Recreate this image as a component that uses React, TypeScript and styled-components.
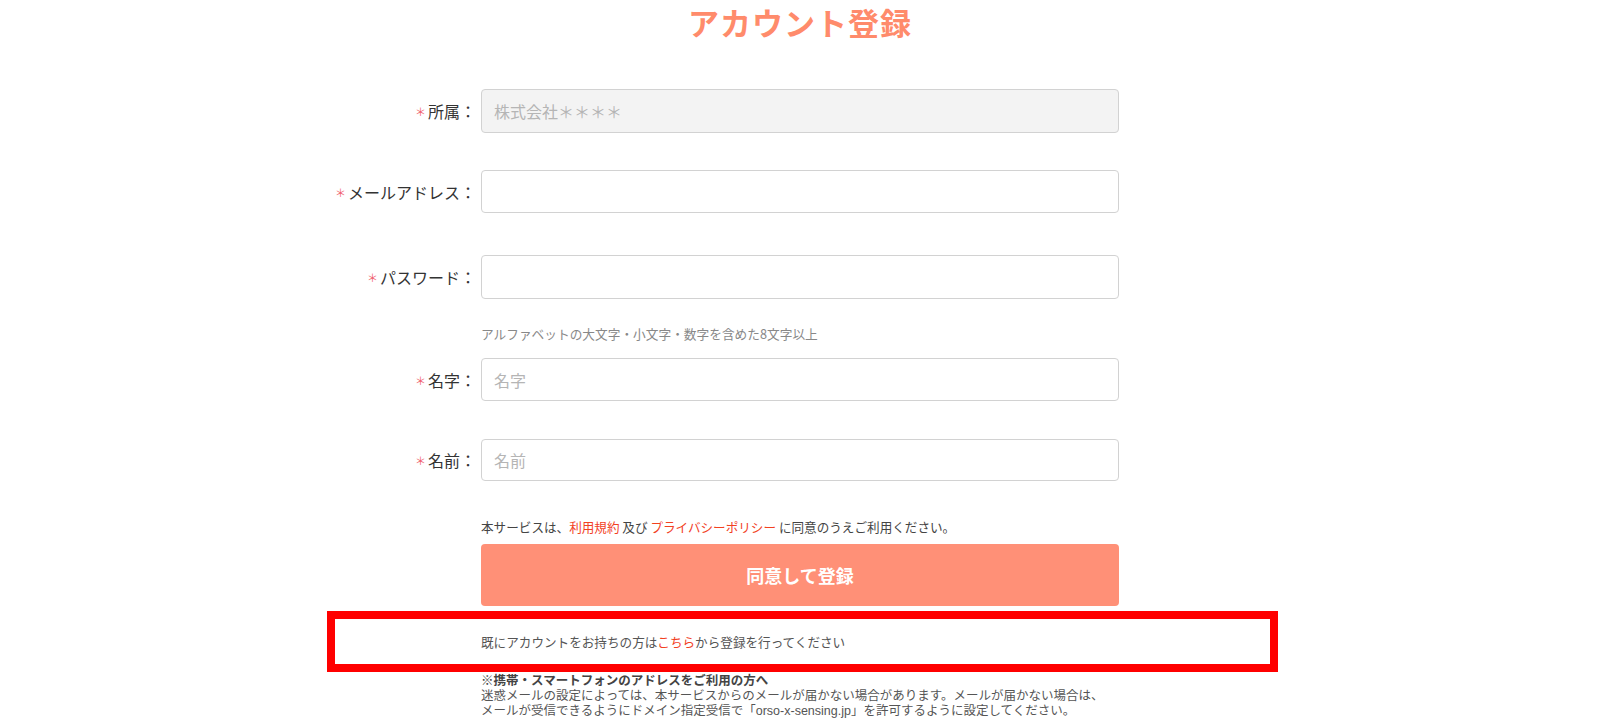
import React from "react";
import styled, { createGlobalStyle } from "styled-components";

const Global = createGlobalStyle`
  html, body { margin: 0; padding: 0; background: #fff; }
  body {
    font-family: "Noto Sans CJK JP", "Noto Sans", "Liberation Sans", sans-serif;
    color: #333;
  }
  * { box-sizing: border-box; }
`;

const Page = styled.div`
  width: 952px;
  margin: 0 auto;
  display: flex;
  flex-direction: column;
`;

const Title = styled.h1`
  margin: 0;
  height: 44px;
  line-height: 44px;
  text-align: center;
  font-size: 31px;
  font-weight: 700;
  letter-spacing: 1px;
  color: #ff8b6b;
`;

const Row = styled.div<{ $top: number }>`
  display: grid;
  grid-template-columns: 152px 638px;
  column-gap: 5px;
  align-items: center;
  margin-top: ${(p) => p.$top}px;
`;

const Label = styled.label`
  text-align: right;
  font-size: 16px;
  line-height: 20px;
  color: #333;
  white-space: nowrap;
`;

const Req = styled.span`
  color: #f0606e;
  font-size: 11px;
  margin-right: 2px;
  vertical-align: 2px;
`;

const Input = styled.input<{ $h?: number }>`
  height: ${(p) => p.$h ?? 44}px;
  width: 100%;
  border: 1px solid #d2d2d2;
  border-radius: 4px;
  padding: 0 12px;
  font-family: inherit;
  font-size: 16px;
  color: #333;
  background: #fff;
  outline: none;
  &::placeholder { color: #b5b5b5; }
  &:disabled {
    background: #f3f3f3;
    color: #b5b5b5;
  }
`;

const Indented = styled.div<{ $top: number }>`
  margin-left: 157px;
  width: 638px;
  margin-top: ${(p) => p.$top}px;
`;

const Hint = styled.p`
  margin: 0;
  font-size: 12.7px;
  line-height: 16px;
  color: #888;
`;

const Terms = styled.p`
  margin: 0;
  font-size: 12.6px;
  line-height: 16px;
  color: #444;
`;

const Link = styled.a`
  color: #f2411f;
  text-decoration: none;
`;

const Submit = styled.button`
  display: block;
  width: 100%;
  height: 62px;
  border: none;
  border-radius: 4px;
  background: #ff9077;
  color: #fff;
  font-family: inherit;
  font-size: 18px;
  font-weight: 700;
  cursor: pointer;
`;

const Highlight = styled.div`
  margin: 5px 0 0 3px;
  width: 951px;
  height: 61px;
  border: 8px solid #ff0000;
  padding-left: 146px;
  display: flex;
  align-items: center;
`;

const LoginNote = styled.p`
  margin: 0;
  font-size: 12.6px;
  color: #555;
`;

const NoteHead = styled.p`
  margin: 0;
  font-size: 12.5px;
  line-height: 16px;
  font-weight: 700;
  color: #444;
`;

const NoteBody = styled.p`
  margin: 1px 0 0;
  font-family: "Liberation Sans", "Noto Sans CJK JP", sans-serif;
  font-size: 12.5px;
  line-height: 15px;
  color: #555;
`;

type FieldProps = {
  label: string;
  top: number;
  placeholder?: string;
  value?: string;
  type?: string;
  disabled?: boolean;
  h?: number;
};

const Field = ({ label, top, placeholder, value, type, disabled, h }: FieldProps) => (
  <Row $top={top}>
    <Label>
      <Req>＊</Req>
      {label}：
    </Label>
    <Input
      type={type ?? "text"}
      placeholder={placeholder}
      defaultValue={value}
      disabled={disabled}
      $h={h}
    />
  </Row>
);

export default function App() {
  return (
    <>
      <Global />
      <Page>
        <Title>アカウント登録</Title>
        <Field label="所属" top={45} value="株式会社＊＊＊＊" disabled />
        <Field label="メールアドレス" top={37} h={43} />
        <Field label="パスワード" top={42} type="password" />
        <Indented $top={27}>
          <Hint>アルファベットの大文字・小文字・数字を含めた8文字以上</Hint>
        </Indented>
        <Field label="名字" top={16} placeholder="名字" h={43} />
        <Field label="名前" top={38} placeholder="名前" h={42} />
        <Indented $top={38}>
          <Terms>
            本サービスは、<Link href="#">利用規約</Link> 及び{" "}
            <Link href="#">プライバシーポリシー</Link> に同意のうえご利用ください。
          </Terms>
        </Indented>
        <Indented $top={9}>
          <Submit type="button">同意して登録</Submit>
        </Indented>
        <Highlight>
          <LoginNote>
            既にアカウントをお持ちの方は<Link href="#">こちら</Link>から登録を行ってください
          </LoginNote>
        </Highlight>
        <Indented $top={0}>
          <NoteHead>※携帯・スマートフォンのアドレスをご利用の方へ</NoteHead>
          <NoteBody>
            迷惑メールの設定によっては、本サービスからのメールが届かない場合があります。メールが届かない場合は、
            <br />
            メールが受信できるようにドメイン指定受信で「orso-x-sensing.jp」を許可するように設定してください。
          </NoteBody>
        </Indented>
      </Page>
    </>
  );
}
